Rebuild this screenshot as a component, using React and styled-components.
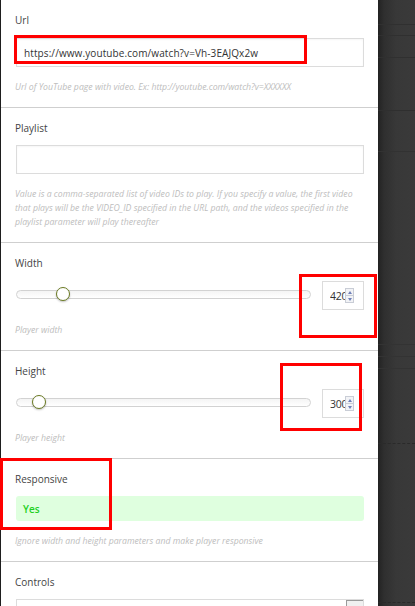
import React from "react";
import styled, { createGlobalStyle } from "styled-components";

const GlobalStyle = createGlobalStyle`
  html, body {
    margin: 0;
    padding: 0;
    height: 606px;
    overflow: hidden;
    background: #383838;
  }
  * {
    box-sizing: border-box;
  }
`;

const Page = styled.div`
  position: relative;
  display: flex;
  width: 415px;
  height: 606px;
  overflow: hidden;
  font-family: "Open Sans", "Liberation Sans", sans-serif;
`;

const Panel = styled.div`
  width: 378px;
  flex: none;
  background: #fff;
  border-left: 1px solid #1e1e1e;
`;

const Backdrop = styled.div`
  flex: 1;
  display: flex;
  flex-direction: column;
  background: linear-gradient(to right, #222 0, #2f2f2f 6px, #383838 18px, #3a3a3a 100%);
`;

const BackRow = styled.div`
  height: ${p => p.h}px;
  flex: none;
  border-bottom: 1px ${p => (p.dashed ? "dashed" : "solid")} ${p => p.line || "#333"};
`;

const Section = styled.div`
  padding: 13px 14px 13px 14px;
  border-bottom: 1px solid #cfcfcf;
`;

const Label = styled.div`
  font-size: 10px;
  line-height: 14px;
  color: #444;
  margin-bottom: ${p => p.gap || 11}px;
`;

const TextInput = styled.div`
  margin-left: 1px;
  height: 29px;
  border: 1px solid #dcdcdc;
  box-shadow: inset 0 1px 2px rgba(0, 0, 0, 0.04);
  padding: 0 7px;
  display: flex;
  align-items: center;
  font-size: 10px;
  letter-spacing: 0.1px;
  color: #333;
`;

const Hint = styled.div`
  margin-top: 13px;
  font-size: 8.7px;
  line-height: 14px;
  font-style: italic;
  color: #bdbdbd;
`;

const SliderRow = styled.div`
  display: flex;
  align-items: center;
  height: 29px;
  padding-left: 1px;
`;

const Track = styled.div`
  position: relative;
  width: 295px;
  height: 9px;
  margin-top: ${p => p.shift || 0}px;
  border: 1px solid #d2d2d2;
  border-radius: 5px;
  background: linear-gradient(#f4f4f4, #fff);
`;

const Knob = styled.div`
  position: absolute;
  top: 50%;
  width: 14px;
  height: 14px;
  margin: -7px 0 0 -7px;
  border-radius: 50%;
  background: #fff;
  border: 1.5px solid #6a7a22;
  box-shadow: 0 1px 2px rgba(0, 0, 0, 0.25);
`;

const NumberBox = styled.div`
  margin-left: 11px;
  width: 42px;
  height: 29px;
  border: 1px solid #dcdcdc;
  display: flex;
  align-items: center;
  padding-left: 7px;
`;

const NumberText = styled.span`
  width: 15px;
  overflow: hidden;
  white-space: nowrap;
  font-size: 10.5px;
  color: #333;
  letter-spacing: -0.3px;
`;

const Spinner = styled.div`
  display: flex;
  flex-direction: column;
  width: 9px;
  height: 15px;
`;

const SpinButton = styled.div`
  flex: 1;
  border: 1px solid #c9cdd6;
  background: #f2f3f6;
  display: flex;
  align-items: center;
  justify-content: center;
  & + & {
    border-top: none;
  }
  &::after {
    content: "";
    border-left: 2.5px solid transparent;
    border-right: 2.5px solid transparent;
    ${p =>
      p.down
        ? "border-top: 3px solid #6f80b8;"
        : "border-bottom: 3px solid #6f80b8;"}
  }
`;

const Toggle = styled.div`
  margin-left: 1px;
  height: 25px;
  width: 348px;
  border-radius: 3px;
  background: #dfffdf;
  display: flex;
  align-items: center;
  padding-left: 7px;
  font-size: 10px;
  font-weight: 600;
  color: #1fd01f;
`;

const SelectBox = styled.div`
  margin-left: 1px;
  height: 29px;
  border: 1px solid #dcdcdc;
  display: flex;
  justify-content: flex-end;
`;

const SelectArrow = styled.div`
  width: 17px;
  height: 100%;
  border: 1px solid #9a9a9a;
  border-right: none;
  border-bottom: none;
  background: #f0f0f0;
`;

const Mark = styled.div`
  position: absolute;
  left: ${p => p.x}px;
  top: ${p => p.y}px;
  width: ${p => p.w}px;
  height: ${p => p.h}px;
  border: 3px solid #ff0000;
  pointer-events: none;
`;

const Slider = ({ value, shift, number }) => (
  <SliderRow>
    <Track shift={shift}>
      <Knob style={{ left: `${value}px` }} />
    </Track>
    <NumberBox>
      <NumberText>{number}</NumberText>
      <Spinner>
        <SpinButton />
        <SpinButton down />
      </Spinner>
    </NumberBox>
  </SliderRow>
);

const backRows = [
  { h: 25, line: "#303030" },
  { h: 11, line: "#303030" },
  { h: 22, line: "#303030" },
  { h: 53, line: "#2f2f2f" },
  { h: 41, line: "#323232" },
  { h: 193, line: "#333" },
  { h: 12, line: "#333" },
  { h: 12, line: "#333" },
  { h: 75, line: "#2a2a2a", dashed: true },
  { h: 159, line: "#2a2a2a", dashed: true }
];

export default function App() {
  return (
    <>
      <GlobalStyle />
      <Page>
        <Panel>
          <Section>
            <Label>Url</Label>
            <TextInput>https://www.youtube.com/watch?v=Vh-3EAJQx2w</TextInput>
            <Hint>Url of YouTube page with video. Ex: http://youtube.com/watch?v=XXXXXX</Hint>
          </Section>
          <Section>
            <Label gap={10}>Playlist</Label>
            <TextInput />
            <Hint>
              Value is a comma-separated list of video IDs to play. If you specify a value, the first video
              that plays will be the VIDEO_ID specified in the URL path, and the videos specified in the
              playlist parameter will play thereafter
            </Hint>
          </Section>
          <Section>
            <Label>Width</Label>
            <Slider value={46} shift={-3} number="420" />
            <Hint>Player width</Hint>
          </Section>
          <Section>
            <Label>Height</Label>
            <Slider value={22} shift={-3} number="300" />
            <Hint>Player height</Hint>
          </Section>
          <Section>
            <Label gap={10}>Responsive</Label>
            <Toggle>Yes</Toggle>
            <Hint>Ignore width and height parameters and make player responsive</Hint>
          </Section>
          <Section>
            <Label gap={10}>Controls</Label>
            <SelectBox>
              <SelectArrow />
            </SelectBox>
          </Section>
        </Panel>
        <Backdrop>
          {backRows.map((r, i) => (
            <BackRow key={i} h={r.h} line={r.line} dashed={r.dashed} />
          ))}
        </Backdrop>
        <Mark x={14} y={35} w={293} h={29} />
        <Mark x={299} y={274} w={78} h={64} />
        <Mark x={280} y={363} w={82} h={68} />
        <Mark x={0} y={458} w={112} h={72} />
      </Page>
    </>
  );
}
